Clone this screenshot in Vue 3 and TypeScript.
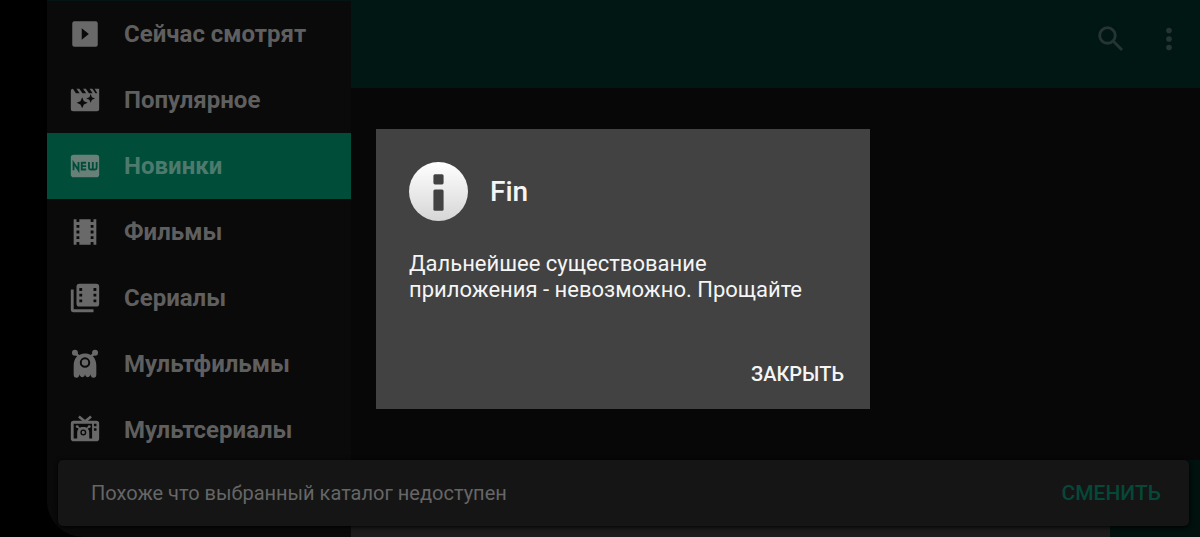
<script setup lang="ts">
import { ref } from 'vue'

interface Category {
  id: string
  title: string
}

const categories: Category[] = [
  { id: 'watching', title: 'Сейчас смотрят' },
  { id: 'popular', title: 'Популярное' },
  { id: 'new', title: 'Новинки' },
  { id: 'movies', title: 'Фильмы' },
  { id: 'series', title: 'Сериалы' },
  { id: 'cartoons', title: 'Мультфильмы' },
  { id: 'cartoon-series', title: 'Мультсериалы' },
]

const selected = ref('new')
const dialogOpen = ref(true)
</script>

<template>
  <div class="screen">
    <nav class="drawer" aria-label="Категории">
      <a
        v-for="item in categories"
        :key="item.id"
        :href="'#' + item.id"
        class="entry"
        :class="{ active: item.id === selected }"
        @click.prevent="selected = item.id"
      >
        <svg class="icon" viewBox="0 0 24 24" aria-hidden="true">
          <path
            v-if="item.id === 'watching'"
            fill-rule="evenodd"
            d="M4.500 3h15A1.500 1.500 0 0 1 21 4.500v15a1.500 1.500 0 0 1-1.500 1.500h-15A1.500 1.500 0 0 1 3 19.500v-15A1.500 1.500 0 0 1 4.500 3zM9.700 8v8l5-4z"
          />
          <path
            v-else-if="item.id === 'popular'"
            fill-rule="evenodd"
            d="M2 5.500A1.500 1.500 0 0 1 3.500 4L5.600 7.200H8.200L6 4h2l2.200 3.200h2.600L10.600 4h2l2.200 3.200h2.600L15.200 4h2l2.200 3.200h1.300L18.800 4H22v14.500a1.500 1.500 0 0 1-1.500 1.500h-17A1.500 1.500 0 0 1 2 18.500zM10 10.100l-1.200 2.700L6.100 14l2.700 1.200L10 17.900l1.200-2.700L13.900 14l-2.700-1.200zM16 7.800l-.9 2.200-2.200.9 2.200.9.900 2.200.9-2.200 2.200-.9-2.200-.9z"
          />
          <g v-else-if="item.id === 'new'">
            <rect x="2" y="4" width="20" height="16" rx="2" />
            <path
              class="new-strokes"
              d="M3.900 15V9.700l3.500 5.300V9.200M12.800 9.700H9.700V14.500H12.800M9.700 12.100H12.800M14.800 9.200v4.200q0 1.100 1.100 1.100h3.200q1.100 0 1.100-1.100V9.200M17.500 9.200v5.300"
            />
          </g>
          <path
            v-else-if="item.id === 'movies'"
            fill-rule="evenodd"
            d="M18 3v2h-2V3H8v2H6V3H4v18h2v-2h2v2h8v-2h2v2h2V3zM8 17H6v-2h2zM8 13H6v-2h2zM8 9H6V7h2zM18 17h-2v-2h2zM18 13h-2v-2h2zM18 9h-2V7h2z"
          />
          <path
            v-else-if="item.id === 'series'"
            fill-rule="evenodd"
            d="M2 6h2v14h14v2H3.500A1.500 1.500 0 0 1 2 20.500zM8 2h12a2 2 0 0 1 2 2v12a2 2 0 0 1-2 2H8a2 2 0 0 1-2-2V4a2 2 0 0 1 2-2zM8 5v2h2V5zM8 9v2h2V9zM8 13v2h2v-2zM18 5v2h2V5zM18 9v2h2V9zM18 13v2h2v-2z"
          />
          <g v-else-if="item.id === 'cartoons'">
            <circle cx="4.900" cy="4" r="2.100" />
            <circle cx="19.100" cy="4" r="2.100" />
            <path class="line" d="M5 4l3.300 3.300M19 4l-3.300 3.300" />
            <path
              fill-rule="evenodd"
              d="M12 4.500C7 4.500 4 8 4 13v6.700a2 2 0 0 0 3.900.6l.3-1 .3 1a1.800 1.800 0 0 0 3.200 0l.3-1 .3 1a1.800 1.800 0 0 0 3.200 0l.3-1 .3 1a2 2 0 0 0 3.900-.6V13c0-5-3-8.500-7.700-8.500zM12 7.300a3.700 3.700 0 1 1 0 7.400 3.700 3.700 0 0 1 0-7.400zM12 8.700a2.300 2.300 0 1 0 0 4.600 2.300 2.300 0 0 0 0-4.600z"
            />
          </g>
          <g v-else>
            <path class="line" d="M7.700 2.500L12 6l4.300-3.500" />
            <path
              fill-rule="evenodd"
              d="M4 5.500h16a2 2 0 0 1 2 2V18a2 2 0 0 1-2 2H4a2 2 0 0 1-2-2V7.500a2 2 0 0 1 2-2zM4 7.500V18h2.500v-4.500c0-1.700 1.300-3.200 3-3.700h2.500c1.700.5 3 2 3 3.700V18h2V7.500zM18.300 7.500v1.800h1.800V7.500zM18.300 10.700v1.800h1.800v-1.800z"
            />
            <circle cx="6.500" cy="9.600" r="1" />
            <circle cx="15" cy="9.600" r="1" />
            <path class="thin" d="M6.500 9.600l2.200 1.800M15 9.600l-2.200 1.800" />
            <circle class="eye" cx="10.800" cy="13.700" r="1.600" />
          </g>
        </svg>
        <span>{{ item.title }}</span>
      </a>
    </nav>

    <main class="content">
      <header class="toolbar">
        <button class="tool" type="button" aria-label="Поиск">
          <svg viewBox="0 0 24 24" aria-hidden="true">
            <circle cx="9.500" cy="9.500" r="5.500" />
            <path d="M13.800 13.800l6 6" />
          </svg>
        </button>
        <button class="tool dots" type="button" aria-label="Меню">
          <svg viewBox="0 0 24 24" aria-hidden="true">
            <circle cx="12" cy="6" r="2" />
            <circle cx="12" cy="12" r="2" />
            <circle cx="12" cy="18" r="2" />
          </svg>
        </button>
      </header>
      <div class="footer"><div class="strip"></div></div>
    </main>

    <div class="snackbar" role="status">
      <span>Похоже что выбранный каталог недоступен</span>
      <button class="change" type="button">СМЕНИТЬ</button>
    </div>

    <div v-if="dialogOpen" class="overlay">
      <section class="dialog" role="alertdialog" aria-labelledby="dialog-title" aria-describedby="dialog-text">
        <div class="heading">
          <svg class="info" viewBox="0 0 58 58" aria-hidden="true">
            <defs>
              <linearGradient id="disc" x1="0" y1="0" x2="0" y2="1">
                <stop offset="0" stop-color="#ffffff" />
                <stop offset="1" stop-color="#d6d6d6" />
              </linearGradient>
            </defs>
            <circle cx="29" cy="29" r="29" fill="url(#disc)" />
            <rect x="24" y="12" width="10" height="10" rx="1.500" fill="#424242" />
            <rect x="24" y="27" width="10" height="21" rx="1.500" fill="#424242" />
          </svg>
          <h1 id="dialog-title">Fin</h1>
        </div>
        <p id="dialog-text">Дальнейшее существование приложения - невозможно. Прощайте</p>
        <button class="close" type="button" @click="dialogOpen = false">ЗАКРЫТЬ</button>
      </section>
    </div>
  </div>
</template>

<style>
body {
  margin: 0;
  background: #000;
}
</style>

<style scoped>
.screen {
  position: relative;
  display: flex;
  box-sizing: border-box;
  height: 100vh;
  padding-left: 47px;
  overflow: hidden;
  background: #000;
  font-family: Roboto, "Noto Sans", sans-serif;
}

button {
  padding: 0;
  border: 0;
  background: none;
  font-family: inherit;
}

.drawer {
  flex: 0 0 304px;
  border-top: 1px solid #031512;
  border-bottom-left-radius: 36px;
  overflow: hidden;
  background: #0a0a0a;
}

.entry {
  display: flex;
  align-items: center;
  gap: 22px;
  height: 66px;
  padding-left: 21px;
  color: #5f5f5f;
  font-size: 24px;
  font-weight: 700;
  text-decoration: none;
}

.active {
  background: #004d3a;
  color: #4d7a6c;
}

.icon {
  width: 34px;
  height: 34px;
  fill: #696969;
}

.active .icon {
  fill: #698079;
}

.icon .new-strokes {
  fill: none;
  stroke: #004d3a;
  stroke-width: 1.300;
}

.line {
  fill: none;
  stroke: #696969;
  stroke-width: 1.800;
}

.thin {
  stroke: #696969;
  stroke-width: 1;
}

.eye {
  stroke: #0a0a0a;
  stroke-width: 1;
}

.content {
  flex: 1;
  display: flex;
  flex-direction: column;
  justify-content: space-between;
  background: #070707;
}

.toolbar {
  display: flex;
  align-items: center;
  justify-content: flex-end;
  gap: 24px;
  height: 88px;
  padding: 0 14px 10px 0;
  box-sizing: border-box;
  background: #001714;
}

.tool {
  width: 34px;
  height: 34px;
}

.tool svg {
  display: block;
  width: 34px;
  height: 34px;
  fill: none;
  stroke: #263533;
  stroke-width: 2;
}

.dots svg {
  fill: #263533;
  stroke: none;
}

.footer {
  display: flex;
  align-items: flex-end;
  height: 77px;
  padding-right: 90px;
  background: #00110e;
}

.strip {
  flex: 1;
  height: 11px;
  background: #1c1c1c;
}

.snackbar {
  position: absolute;
  right: 11px;
  bottom: 11px;
  left: 58px;
  display: flex;
  align-items: center;
  justify-content: space-between;
  box-sizing: border-box;
  height: 66px;
  padding: 0 28px 0 33px;
  border-radius: 5px;
  background: #151515;
  box-shadow: 0 1px 5px #000;
  color: #666;
  font-size: 20px;
}

.change {
  color: #064838;
  font-size: 21px;
  font-weight: 500;
}

.overlay {
  position: absolute;
  inset: 0;
  display: flex;
  align-items: center;
  justify-content: center;
  padding-left: 46px;
}

.dialog {
  display: flex;
  flex-direction: column;
  box-sizing: border-box;
  width: 494px;
  padding: 33px 26px 20px 33px;
  background: #424242;
  color: #f5f5f5;
}

.heading {
  display: flex;
  align-items: center;
  gap: 22px;
}

.info {
  width: 59px;
  height: 59px;
}

h1 {
  margin: 0;
  font-size: 28px;
  font-weight: 500;
}

p {
  margin: 30px 7px 56px 0;
  font-size: 22px;
  line-height: 26px;
}

.close {
  align-self: flex-end;
  height: 30px;
  color: #f5f5f5;
  font-size: 20px;
  font-weight: 500;
}
</style>
